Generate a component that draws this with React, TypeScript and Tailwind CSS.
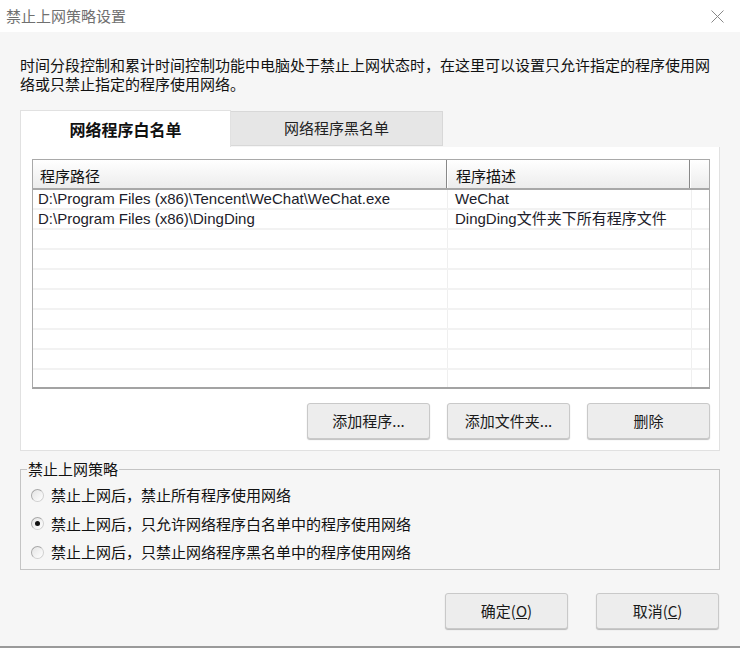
import React from 'react'

const cjk = "font-['Noto_Sans_CJK_SC',sans-serif]"
const latin = "font-['Liberation_Sans','Noto_Sans_CJK_SC',sans-serif]"

const rows = [
  { path: 'D:\\Program Files (x86)\\Tencent\\WeChat\\WeChat.exe', desc: 'WeChat' },
  { path: 'D:\\Program Files (x86)\\DingDing', desc: 'DingDing文件夹下所有程序文件' },
  ...Array.from({ length: 8 }, () => ({ path: '', desc: '' })),
]

function Btn({ children, className = '' }: { children: React.ReactNode; className?: string }) {
  return (
    <button
      className={`w-[123px] h-[36px] rounded-[3px] border border-[#c9c9c9] bg-[#ededed] shadow-[0_1px_1px_rgba(0,0,0,0.25)] text-[15px] text-[#1a1a1a] ${cjk} ${className}`}>
      {children}
    </button>
  )
}

function Radio({ checked, label }: { checked?: boolean; label: string }) {
  return (
    <div className="flex items-center h-[28.5px] pl-[10px]">
      <span className="w-[13px] h-[13px] rounded-full border border-[#a8a8a8] border-b-[#d0d0d0] border-r-[#d0d0d0] bg-gradient-to-br from-[#e4e4e4] to-white flex items-center justify-center">
        {checked && <span className="w-[5px] h-[5px] rounded-full bg-[#111]" />}
      </span>
      <span className="ml-[7px] text-[15px] text-[#111]">{label}</span>
    </div>
  )
}

export default function App() {
  return (
    <div className={`w-[740px] h-[648px] bg-[#f6f6f6] flex flex-col border-b-2 border-[#9a9a9a] ${cjk}`}>
      {/* title bar */}
      <div className="h-[32px] bg-white flex items-center justify-between pl-[6px] pr-[16px] shrink-0">
        <span className="text-[15px] text-[#707070]">禁止上网策略设置</span>
        <svg width="13" height="13" viewBox="0 0 13 13">
          <path d="M0.5 0.5 L12.5 12.5 M12.5 0.5 L0.5 12.5" stroke="#888" strokeWidth="1" />
        </svg>
      </div>

      <div className="px-[20px] flex flex-col">
        <p className="mt-[23px] text-[15px] leading-[19px] text-[#111]">
          时间分段控制和累计时间控制功能中电脑处于禁止上网状态时，在这里可以设置只允许指定的程序使用网<br />
          络或只禁止指定的程序使用网络。
        </p>

        {/* tabs */}
        <div className="mt-[17px] flex items-end h-[37px]">
          <div className="w-[211px] h-[37px] bg-white border border-b-0 border-[#e1e1e1] flex items-center justify-center text-[16px] font-bold text-[#111]">
            网络程序白名单
          </div>
          <div className="w-[212px] h-[35px] mb-[1px] bg-[#e6e6e6] border border-[#d8d8d8] border-l-0 flex items-center justify-center text-[15px] text-[#222]">
            网络程序黑名单
          </div>
        </div>

        {/* tab panel */}
        <div className="h-[304px] bg-white border border-t-0 border-[#e1e1e1] pt-[12px] pl-[11px] pr-[9px] flex flex-col">
          <div className="h-[230px] border border-[#a9a9a9] border-b-2 border-b-[#a3a3a3] flex flex-col overflow-hidden">
            <div className="h-[30px] flex bg-gradient-to-b from-white to-[#ececec] border-b-2 border-[#a8a8a8] text-[15px] text-[#111] shrink-0">
              <div className="w-[414px] pl-[7px] flex items-end pb-[1px] border-r border-[#888]">程序路径</div>
              <div className="w-[243px] pl-[8px] flex items-end pb-[1px] border-l border-white border-r border-r-[#888]">程序描述</div>
              <div className="flex-1 border-l border-white" />
            </div>
            {rows.map((r, i) => (
              <div key={i} className={`h-[20px] flex border-b-2 border-[#f2f2f2] text-[15px] text-[#1c1c2a] ${latin} shrink-0`}>
                <div className="w-[415px] pl-[5px] flex items-center whitespace-nowrap border-r border-[#efefef]">{r.path}</div>
                <div className="w-[244px] pl-[7px] flex items-center whitespace-nowrap border-r border-[#efefef]">{r.desc}</div>
                <div className="flex-1" />
              </div>
            ))}
          </div>
          <div className="mt-[14px] flex justify-end gap-[17px]">
            <Btn>添加程序...</Btn>
            <Btn>添加文件夹...</Btn>
            <Btn>删除</Btn>
          </div>
        </div>

        {/* group box */}
        <fieldset className="mt-[10px] h-[109px] border border-[#c4c4c4] px-0 pb-0 pt-[4px] m-0">
          <legend className="ml-[6px] px-[1px] text-[15px] leading-[16px] text-[#111]">禁止上网策略</legend>
          <Radio label="禁止上网后，禁止所有程序使用网络" />
          <Radio checked label="禁止上网后，只允许网络程序白名单中的程序使用网络" />
          <Radio label="禁止上网后，只禁止网络程序黑名单中的程序使用网络" />
        </fieldset>

        <div className="mt-[23px] flex justify-end gap-[28px] pr-[1px]">
          <Btn>确定(<span className="underline">O</span>)</Btn>
          <Btn>取消(<span className="underline">C</span>)</Btn>
        </div>
      </div>
    </div>
  )
}
